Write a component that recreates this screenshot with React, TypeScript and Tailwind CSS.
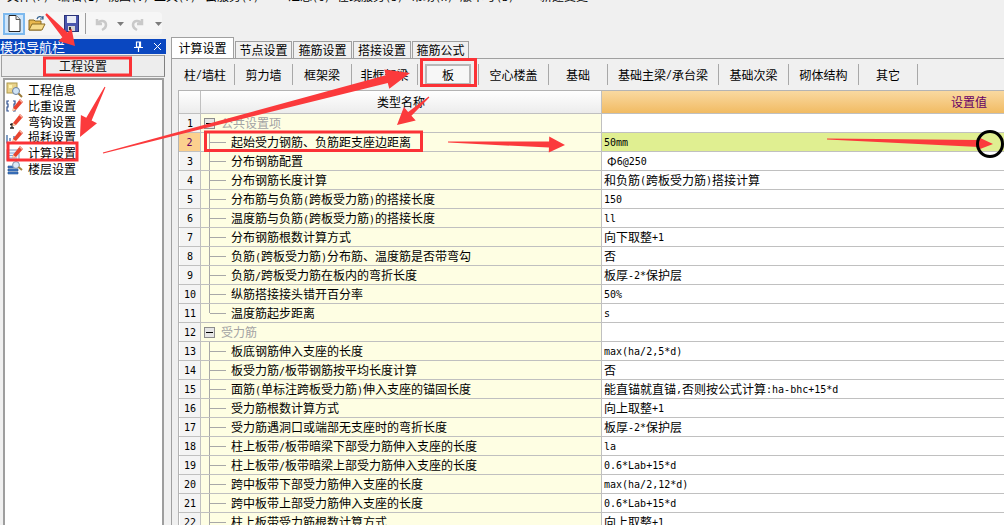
const CJK = '"Noto Sans CJK SC", "Liberation Sans", sans-serif';
const MONO = '"DejaVu Sans Mono", "Liberation Mono", monospace';

function Txt({ t }: { t: string }) {
  const parts = t.split(/([\x00-\x7f]+)/).filter(Boolean);
  return (
    <>
      {parts.map((p, i) =>
        /^[\x00-\x7f]+$/.test(p) ? (
          <span key={i} className="text-[10px] whitespace-pre" style={{ fontFamily: MONO }}>{p}</span>
        ) : (
          <span key={i}>{p}</span>
        )
      )}
    </>
  );
}

const rows: { n: number; name: string; value: string; group?: boolean; last?: boolean; sel?: boolean; pad?: boolean }[] = [
  { n: 1, name: "公共设置项", value: "", group: true },
  { n: 2, name: "起始受力钢筋、负筋距支座边距离", value: "50mm", sel: true },
  { n: 3, name: "分布钢筋配置", value: "Φ6@250", pad: true },
  { n: 4, name: "分布钢筋长度计算", value: "和负筋(跨板受力筋)搭接计算" },
  { n: 5, name: "分布筋与负筋(跨板受力筋)的搭接长度", value: "150" },
  { n: 6, name: "温度筋与负筋(跨板受力筋)的搭接长度", value: "ll" },
  { n: 7, name: "分布钢筋根数计算方式", value: "向下取整+1" },
  { n: 8, name: "负筋(跨板受力筋)分布筋、温度筋是否带弯勾", value: "否" },
  { n: 9, name: "负筋/跨板受力筋在板内的弯折长度", value: "板厚-2*保护层" },
  { n: 10, name: "纵筋搭接接头错开百分率", value: "50%" },
  { n: 11, name: "温度筋起步距离", value: "s", last: true },
  { n: 12, name: "受力筋", value: "", group: true },
  { n: 13, name: "板底钢筋伸入支座的长度", value: "max(ha/2,5*d)" },
  { n: 14, name: "板受力筋/板带钢筋按平均长度计算", value: "否" },
  { n: 15, name: "面筋(单标注跨板受力筋)伸入支座的锚固长度", value: "能直锚就直锚,否则按公式计算:ha-bhc+15*d" },
  { n: 16, name: "受力筋根数计算方式", value: "向上取整+1" },
  { n: 17, name: "受力筋遇洞口或端部无支座时的弯折长度", value: "板厚-2*保护层" },
  { n: 18, name: "柱上板带/板带暗梁下部受力筋伸入支座的长度", value: "la" },
  { n: 19, name: "柱上板带/板带暗梁上部受力筋伸入支座的长度", value: "0.6*Lab+15*d" },
  { n: 20, name: "跨中板带下部受力筋伸入支座的长度", value: "max(ha/2,12*d)" },
  { n: 21, name: "跨中板带上部受力筋伸入支座的长度", value: "0.6*Lab+15*d" },
  { n: 22, name: "柱上板带受力筋根数计算方式", value: "向上取整+1" },
];

const subTabs: { t: string; w: string; active?: boolean }[] = [
  { t: "柱/墙柱", w: "w-[59px]" },
  { t: "剪力墙", w: "w-[58px]" },
  { t: "框架梁", w: "w-[59px]" },
  { t: "非框架梁", w: "w-[66px]" },
  { t: "板", w: "w-[61px]", active: true },
  { t: "空心楼盖", w: "w-[70px]" },
  { t: "基础", w: "w-[59px]" },
  { t: "基础主梁/承台梁", w: "w-[111px]" },
  { t: "基础次梁", w: "w-[70px]" },
  { t: "砌体结构", w: "w-[70px]" },
  { t: "其它", w: "w-[59px]" },
];

const menuItems: [string, string][] = [
  ["文件(F)", "ml-[7px] w-[38px]"],
  ["编辑(E)", "ml-[13px] w-[36px]"],
  ["视图(V)", "ml-[13px] w-[36px]"],
  ["工具(T)", "ml-[11px] w-[38px]"],
  ["云服务(Y)", "ml-[13px] w-[47px]"],
  ["汇总(C)", "ml-[36px] w-[38px]"],
  ["在线服务(S)", "ml-[11px] w-[65px]"],
  ["帮助(H)", "ml-[9px] w-[40px]"],
  ["版本号(B)", "ml-[9px] w-[49px]"],
  ["新建变更", "ml-[31px] w-[48px]"],
];

function Arrow({ x1, y1, x2, y2, tail = 1, neck = 6, head = 11, len = 22 }: { x1: number; y1: number; x2: number; y2: number; tail?: number; neck?: number; head?: number; len?: number }) {
  const dx = x2 - x1, dy = y2 - y1;
  const d = Math.hypot(dx, dy);
  const ux = dx / d, uy = dy / d, px = -uy, py = ux;
  const bx = x2 - ux * len, by = y2 - uy * len;
  const p = [
    [x1 + px * tail * 0.5, y1 + py * tail * 0.5],
    [bx + px * neck * 0.5, by + py * neck * 0.5],
    [bx + px * head, by + py * head],
    [x2, y2],
    [bx - px * head, by - py * head],
    [bx - px * neck * 0.5, by - py * neck * 0.5],
    [x1 - px * tail * 0.5, y1 - py * tail * 0.5],
  ];
  return <polygon points={p.map((q) => q.join(",")).join(" ")} fill="#fb3a3c" />;
}

function ListIcon({ kind }: { kind: number }) {
  const pencil = (
    <>
      <path d="M7 10 L14 1 L17 4 L10 12 L6.500 13 Z" fill="#e8432f" />
      <path d="M14 1 L17 4 L16 5 L13 2 Z" fill="#f6b2a0" />
      <path d="M7 10 L10 12 L6.500 13 Z" fill="#f3d9b0" />
    </>
  );
  return (
    <svg width="17" height="16" viewBox="0 0 17 16" className="shrink-0">
      {kind === 0 && (
        <>
          <rect x="1" y="1" width="10" height="10" fill="#e9d28a" stroke="#b09a4a" />
          <path d="M3 3h3v3h-3z" fill="#fff6b0" />
          <circle cx="10" cy="9" r="3.500" fill="#cfe3f5" stroke="#6a7f9c" />
          <path d="M12.500 11.500 L16 15" stroke="#9a7a38" strokeWidth="2" />
        </>
      )}
      {kind === 1 && (
        <>
          <path d="M3 3h-2v3h1v3h-1v4h2M7 3h2v3h-1v3h1v4h-2" fill="none" stroke="#2d4f8f" strokeWidth="1.200" />
          {pencil}
        </>
      )}
      {kind === 2 && (
        <>
          <path d="M6 10v5M4 11.500h4M4 15h4" stroke="#222" strokeWidth="1.300" />
          {pencil}
        </>
      )}
      {kind === 3 && (
        <>
          <path d="M1 6v8h5M4 9v3M8 7v5" fill="none" stroke="#2d5f9f" strokeWidth="1.200" />
          {pencil}
        </>
      )}
      {kind === 4 && (
        <>
          <rect x="1" y="5" width="12" height="10" fill="#eef4fb" stroke="#7f9cc0" />
          <path d="M3 8h8M3 10.500h8M3 13h8" stroke="#7ea6d8" />
          {pencil}
        </>
      )}
      {kind === 5 && (
        <>
          <path d="M2 6h10v2H2zM2 9h10v2H2zM2 12h10v2H2z" fill="#3f78c8" stroke="#21508f" strokeWidth="0.600" />
          <circle cx="10" cy="5" r="3.400" fill="#dbe9f7" stroke="#7d8ea5" />
          <path d="M12.500 7 L16 10" stroke="#a5823c" strokeWidth="2" />
        </>
      )}
    </svg>
  );
}

const listItems = ["工程信息", "比重设置", "弯钩设置", "损耗设置", "计算设置", "楼层设置"];

export default function App() {
  return (
    <div className="relative w-[1004px] h-[525px] overflow-hidden bg-[#f0f0f0] text-black text-[12px] flex flex-col" style={{ fontFamily: CJK }}>
      {/* clipped menu bar */}
      <div className="h-[3px] overflow-hidden shrink-0">
        <div className="flex -mt-[11px] h-[14px] leading-[14px] whitespace-nowrap">
          {menuItems.map(([t, c]) => (
            <div key={t} className={c}><Txt t={t} /></div>
          ))}
        </div>
      </div>

      {/* toolbar */}
      <div className="mt-[9px] h-[23px] w-[160px] ml-[2px] shrink-0 bg-[#f6f6f6] rounded-sm flex items-center">
        <div className="ml-px w-[22px] h-[22px] bg-[#cfe6fb] border-2 border-[#7db9ee] flex items-center justify-center">
          <svg width="13" height="17" viewBox="0 0 13 17"><path d="M1 .5h7l4 4v12H1z" fill="#fff" stroke="#222" /><path d="M8 .5v4h4" fill="#e8e8e8" stroke="#555" /></svg>
        </div>
        <svg width="18" height="17" viewBox="0 0 18 17" className="ml-[3px]">
          <path d="M1 15V5h5l1 1h6v9z" fill="#e9b84e" stroke="#8a6a22" />
          <path d="M1 15l3-6h13l-3 6z" fill="#f7dc8c" stroke="#8a6a22" />
          <path d="M9 4c1-3 4-3 6-1M15 1v3h-3" fill="none" stroke="#2f5e8e" strokeWidth="1.200" />
        </svg>
        <svg width="15" height="17" viewBox="0 0 15 17" className="ml-[18px]">
          <rect x=".5" y=".5" width="14" height="16" fill="#4a56ad" stroke="#2a3278" />
          <rect x="3" y="1" width="9" height="7" fill="#e9ecf6" />
          <rect x="4" y="11" width="7" height="5" fill="#d4d4d4" />
          <rect x="5" y="12" width="2" height="3" fill="#333" />
        </svg>
        <div className="ml-[6px] w-px h-[21px] bg-[#9c9c9c]" />
        <svg width="14" height="16" viewBox="0 0 14 16" className="ml-[8px]"><path d="M3 3v5h5M3.500 7.500C6 3.500 12 4.500 12 9c0 3-2 4-4 5" fill="none" stroke="#c9c9c9" strokeWidth="2.500" /></svg>
        <svg width="7" height="4" viewBox="0 0 7 4" className="ml-[9px]"><path d="M0 0h7L3.500 4z" fill="#7c7c7c" /></svg>
        <svg width="14" height="16" viewBox="0 0 14 16" className="ml-[7px]"><path d="M11 3v5H6M10.500 7.500C8 3.500 2 4.500 2 9c0 3 2 4 4 5" fill="none" stroke="#c9c9c9" strokeWidth="2.500" /></svg>
        <svg width="7" height="4" viewBox="0 0 7 4" className="ml-[10px]"><path d="M0 0h7L3.500 4z" fill="#7c7c7c" /></svg>
      </div>

      {/* main */}
      <div className="mt-[3px] flex flex-1 min-h-0">
        {/* left panel */}
        <div className="w-[166px] shrink-0 flex flex-col pt-px">
          <div className="h-[15px] bg-[#0a47c0] text-white flex items-center justify-between text-[13px] leading-[15px]">
            <span>模块导航栏</span>
            <div className="flex items-center gap-[10px] pr-[4px]">
              <svg width="9" height="11" viewBox="0 0 9 11"><path d="M2.500 1h4v5h-4zM0 6.500h9M4.500 6.500V11M5.500 1v5" fill="none" stroke="#fff" strokeWidth="1.200" /></svg>
              <svg width="9" height="9" viewBox="0 0 9 9"><path d="M1 1l7 7M8 1l-7 7" stroke="#fff" /></svg>
            </div>
          </div>
          <div className="mt-px ml-px mr-px h-[22px] bg-[#ededed] border border-[#a0a0a0] border-r-[#808080] flex items-center justify-center text-[#111]">工程设置</div>
          <div className="mt-px ml-[3px] mr-[2px] flex-1 bg-white border-2 border-b-0 border-[#9e9e9e] pt-[2px] pl-px">
            {listItems.map((t, i) => (
              <div key={t} className="flex items-center h-[15.7px] leading-[15px]">
                <ListIcon kind={i} />
                <span className="ml-[5px] text-[12px]">{t}</span>
              </div>
            ))}
          </div>
        </div>

        {/* right */}
        <div className="flex-1 min-w-0 flex flex-col ml-[5px]">
          <div className="flex items-end h-[20px] shrink-0">
            <div className="w-[63px] h-[21px] bg-white border border-[#a0a0a0] border-b-0 flex items-center justify-center relative z-10">计算设置</div>
            <div className="ml-px w-[57px] h-[17px] bg-[#f0f0f0] border border-[#a0a0a0] border-b-0 flex items-center justify-center">节点设置</div>
            <div className="ml-px w-[59px] h-[17px] border border-[#a0a0a0] border-b-0 flex items-center justify-center">箍筋设置</div>
            <div className="ml-px w-[58px] h-[17px] border border-[#a0a0a0] border-b-0 flex items-center justify-center">搭接设置</div>
            <div className="ml-px w-[57px] h-[17px] border border-[#a0a0a0] border-b-0 flex items-center justify-center">箍筋公式</div>
          </div>
          <div className="flex-1 min-h-0 border-t border-l border-[#a0a0a0] flex flex-col pl-[4px]">
            <div className="h-[31px] shrink-0 flex items-center">
              {subTabs.map((s) => (
                <div key={s.t} className={`${s.w} h-[21px] shrink-0 border-r border-[#a8a8a8] flex items-center justify-center`}>
                  {s.active ? (
                    <div className="w-[46px] h-[21px] border-2 border-[#b8b8b8] bg-[#f7f7f7] flex items-center justify-center"><Txt t={s.t} /></div>
                  ) : (
                    <Txt t={s.t} />
                  )}
                </div>
              ))}
            </div>
            <div className="ml-[2px] flex-1 min-h-0 overflow-hidden border-t border-l border-[#b4b4b4]">
              {/* header */}
              <div className="flex h-[23px] border-b border-[#c0c0c0]">
                <div className="w-[22px] shrink-0 border-r border-[#c0c0c0] bg-gradient-to-b from-[#ffffff] to-[#ececec]" />
                <div className="w-[401px] shrink-0 border-r border-[#c0c0c0] bg-gradient-to-b from-[#ffffff] to-[#ececec] flex items-center justify-center">类型名称</div>
                <div className="flex-1 bg-gradient-to-b from-[#f9d9a0] to-[#f1bb62] flex items-center justify-end pr-[17px] text-[#660066]">设置值</div>
              </div>
              {rows.map((r) => (
                <div key={r.n} className="flex h-[19px] border-b border-[#c0c0c0]">
                  <div className={`w-[22px] shrink-0 border-r border-[#c0c0c0] flex items-center justify-center text-[10px] ${r.sel ? "bg-[#fbd08e] text-[#660066]" : "bg-[#f4f4f4] border-l border-l-white"}`} style={{ fontFamily: MONO }}>{r.n}</div>
                  <div className="w-[401px] shrink-0 border-r border-[#c0c0c0] bg-[#fefee3] flex items-center whitespace-nowrap overflow-hidden">
                    {r.group ? (
                      <>
                        <div className="ml-[3px] w-[11px] h-[11px] border border-[#8c8c8c] bg-[#e6e6e6] flex items-center justify-center"><div className="w-[7px] h-px bg-black" /></div>
                        <span className="ml-[6px] text-[#a3a3a3]">{r.name}</span>
                      </>
                    ) : (
                      <>
                        <div className={`ml-[8px] w-px bg-[#a8a8a8] ${r.last ? "h-1/2 self-start" : "self-stretch"}`} />
                        <div className="w-[16px] h-px bg-[#a8a8a8]" />
                        <span className="ml-[5px]"><Txt t={r.name} /></span>
                      </>
                    )}
                  </div>
                  <div className={`flex-1 min-w-0 flex items-center whitespace-nowrap overflow-hidden ${r.pad ? "pl-[5px]" : "pl-[2px]"} ${r.sel ? "bg-[#e0ef91]" : "bg-white"}`}>
                    <Txt t={r.value} />
                  </div>
                </div>
              ))}
            </div>
          </div>
        </div>
      </div>

      {/* annotations */}
      <svg width="1004" height="525" viewBox="0 0 1004 525" className="absolute inset-0 pointer-events-none">
        <g fill="none" stroke="#fb3236" strokeWidth="3">
          <rect x="44.500" y="58" width="86" height="17" />
          <rect x="8" y="143" width="69" height="17" />
          <rect x="421.500" y="59.500" width="54" height="26" />
          <rect x="205.500" y="132" width="216" height="18.500" />
        </g>
        <Arrow x1={46} y1={14} x2={75} y2={46} tail={2} neck={7} head={9} len={15} />
        <Arrow x1={103} y1={153} x2={410} y2={73} tail={1} neck={8} head={10} len={24} />
        <Arrow x1={105} y1={87} x2={80} y2={137} tail={1} neck={6} head={9} len={20} />
        <Arrow x1={429} y1={97} x2={397} y2={125} tail={1} neck={5} head={9} len={17} />
        <Arrow x1={448} y1={142} x2={565} y2={145} tail={1} neck={6} head={8} len={16} />
        <Arrow x1={827} y1={139} x2={993} y2={144} tail={1} neck={7} head={6} len={14} />
        <circle cx="990" cy="144" r="12.500" fill="none" stroke="#000" strokeWidth="3" />
      </svg>
    </div>
  );
}
